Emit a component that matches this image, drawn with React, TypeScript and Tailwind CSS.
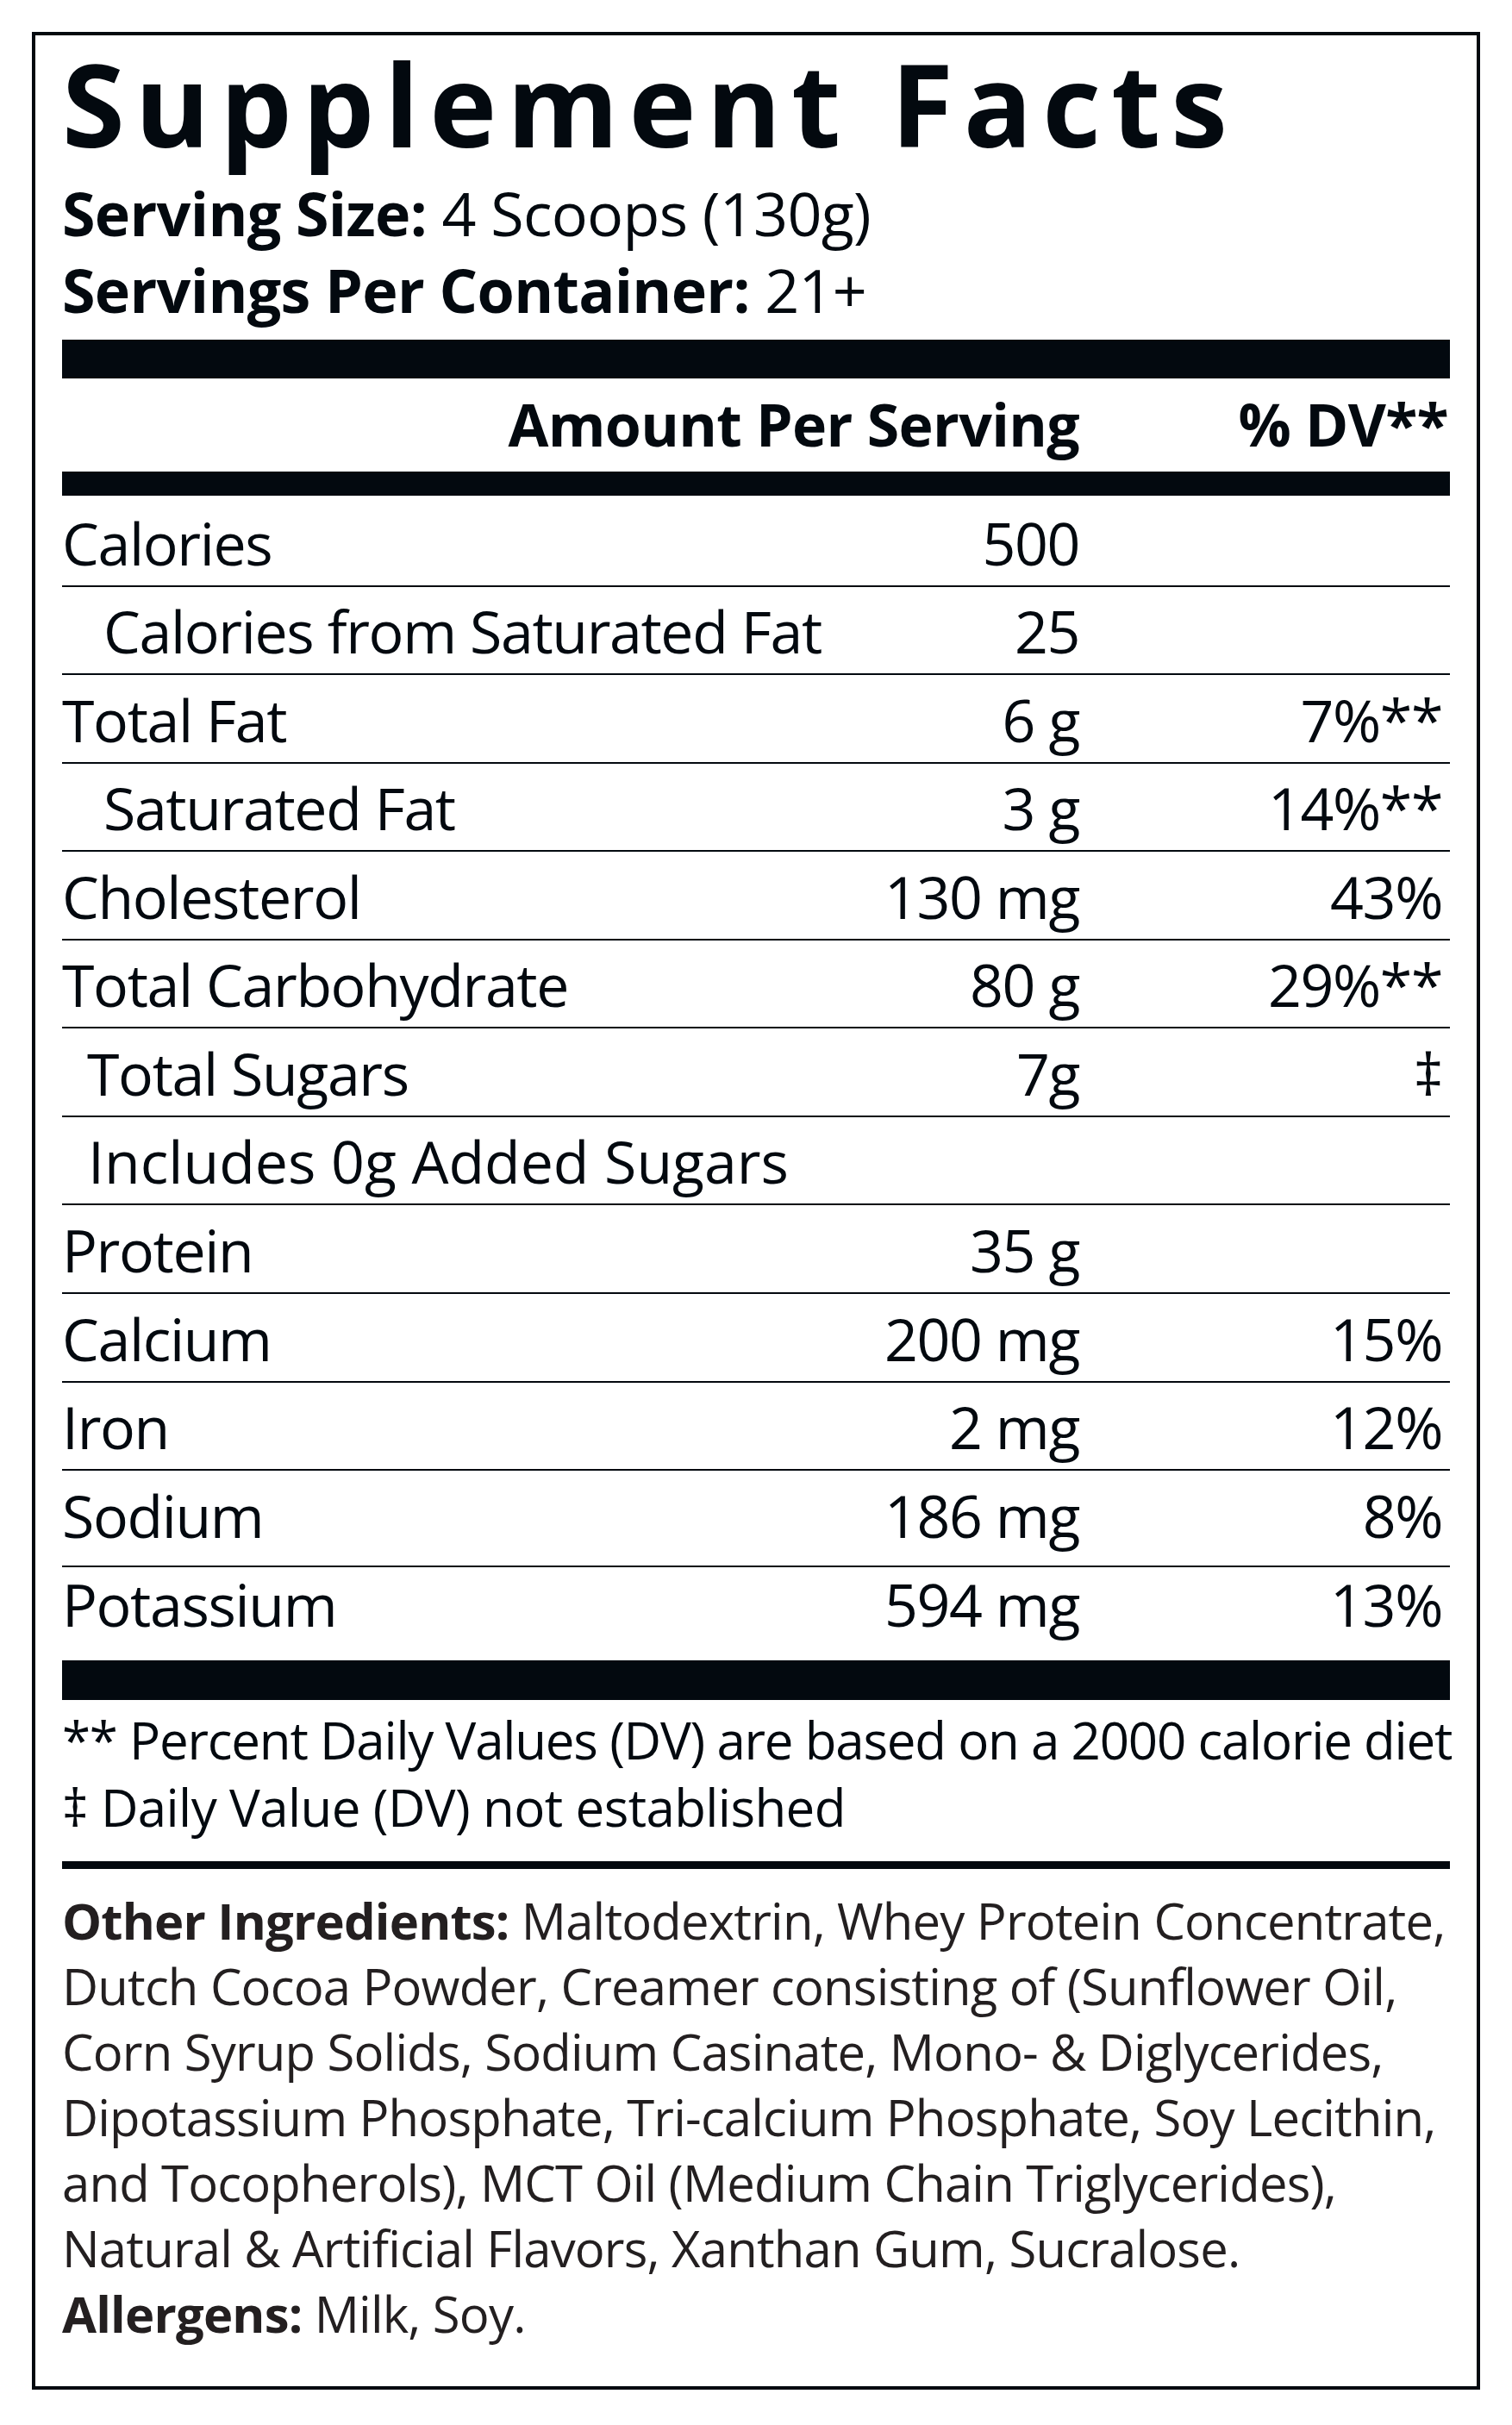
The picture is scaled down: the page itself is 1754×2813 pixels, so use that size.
import React from "react";

type Row = {
  label: string;
  value: string;
  dv: string;
  indent: string;
  height: string;
  pad: string;
  track?: string;
  last?: boolean;
};

const ROWS: Row[] = [
  { label: "Calories", value: "500", dv: "", indent: "", height: "h-[106px]", pad: "pb-[15px]" },
  { label: "Calories from Saturated Fat", value: "25", dv: "", indent: "pl-[48px]", height: "h-[102px]", pad: "pb-[15px]" },
  { label: "Total Fat", value: "6 g", dv: "7%**", indent: "", height: "h-[103px]", pad: "pb-[15px]" },
  { label: "Saturated Fat", value: "3 g", dv: "14%**", indent: "pl-[48px]", height: "h-[102px]", pad: "pb-[15px]" },
  { label: "Cholesterol", value: "130 mg", dv: "43%", indent: "", height: "h-[103px]", pad: "pb-[15px]" },
  { label: "Total Carbohydrate", value: "80 g", dv: "29%**", indent: "", height: "h-[102px]", pad: "pb-[15px]" },
  { label: "Total Sugars", value: "7g", dv: "‡", indent: "pl-[29px]", height: "h-[103px]", pad: "pb-[15px]" },
  { label: "Includes 0g Added Sugars", value: "", dv: "", indent: "pl-[30px]", height: "h-[102px]", pad: "pb-[15px]", track: "tracking-normal" },
  { label: "Protein", value: "35 g", dv: "", indent: "", height: "h-[103px]", pad: "pb-[15px]" },
  { label: "Calcium", value: "200 mg", dv: "15%", indent: "", height: "h-[103px]", pad: "pb-[15px]" },
  { label: "Iron", value: "2 mg", dv: "12%", indent: "", height: "h-[102px]", pad: "pb-[15px]" },
  { label: "Sodium", value: "186 mg", dv: "8%", indent: "", height: "h-[112px]", pad: "pb-[24px]" },
  { label: "Potassium", value: "594 mg", dv: "13%", indent: "", height: "h-[108px]", pad: "pb-[31px]", last: true },
];

const INGREDIENTS = [
  "Dutch Cocoa Powder, Creamer consisting of (Sunflower Oil,",
  "Corn Syrup Solids, Sodium Casinate, Mono- & Diglycerides,",
  "Dipotassium Phosphate, Tri-calcium Phosphate, Soy Lecithin,",
  "and Tocopherols), MCT Oil (Medium Chain Triglycerides),",
  "Natural & Artificial Flavors, Xanthan Gum, Sucralose.",
];

function NutrientRow({ row }: { row: Row }) {
  return (
    <div
      className={`flex items-end ${row.height} ${row.pad} ${
        row.last ? "" : "border-b-2 border-[#03090f]"
      } text-[68px] leading-none tracking-[-0.02em] whitespace-nowrap`}
    >
      <div className={`flex-1 ${row.indent} ${row.track ?? ""}`}>{row.label}</div>
      <div className="text-right">{row.value}</div>
      <div className="w-[430px] shrink-0 text-right pr-[9px]">{row.dv}</div>
    </div>
  );
}

export default function App() {
  return (
    <div className="w-[1754px] h-[2813px] bg-white pt-[37px] pl-[37px] font-['Open_Sans',sans-serif] text-[#03090f]">
      <div className="w-[1680px] h-[2735px] border-4 border-[#03090f] px-[31px] pt-[29px]">
        {/* Title */}
        <h1 className="text-[132px] font-bold leading-[100px] tracking-[0.09em] whitespace-nowrap">
          Supplement Facts
        </h1>

        {/* Serving info */}
        <div className="mt-[33px] text-[70px] leading-[89px] tracking-[-0.01em] whitespace-nowrap">
          <div>
            <span className="font-bold">Serving Size:</span> 4 Scoops (130g)
          </div>
          <div>
            <span className="font-bold">Servings Per Container:</span> 21+
          </div>
        </div>

        <div className="mt-[13px] h-[45px] bg-[#03090f]" />

        {/* Column header */}
        <div className="flex h-[108px] text-[68px] leading-[106px] font-bold tracking-[-0.01em] whitespace-nowrap">
          <div className="flex-1 text-right">Amount Per Serving</div>
          <div className="w-[430px] shrink-0 text-right pr-[2px]">% DV**</div>
        </div>

        <div className="h-[28px] bg-[#03090f]" />

        {ROWS.map((row) => (
          <NutrientRow key={row.label} row={row} />
        ))}

        <div className="h-[46px] bg-[#03090f]" />

        {/* Footnotes */}
        <div className="mt-[7px] text-[60px] leading-[78px] whitespace-nowrap">
          <div className="tracking-[-0.02em]">** Percent Daily Values (DV) are based on a 2000 calorie diet</div>
          <div className="tracking-[-0.01em]">‡ Daily Value (DV) not established</div>
        </div>

        <div className="mt-[24px] h-[9px] bg-[#03090f]" />

        {/* Ingredients */}
        <div className="mt-[22px] text-[58px] leading-[76px] tracking-[-0.014em] whitespace-nowrap text-[#231f20]">
          <div>
            <span className="font-bold">Other Ingredients:</span> Maltodextrin, Whey Protein Concentrate,
          </div>
          {INGREDIENTS.map((line) => (
            <div key={line}>{line}</div>
          ))}
          <div>
            <span className="font-bold">Allergens:</span> Milk, Soy.
          </div>
        </div>
      </div>
    </div>
  );
}
